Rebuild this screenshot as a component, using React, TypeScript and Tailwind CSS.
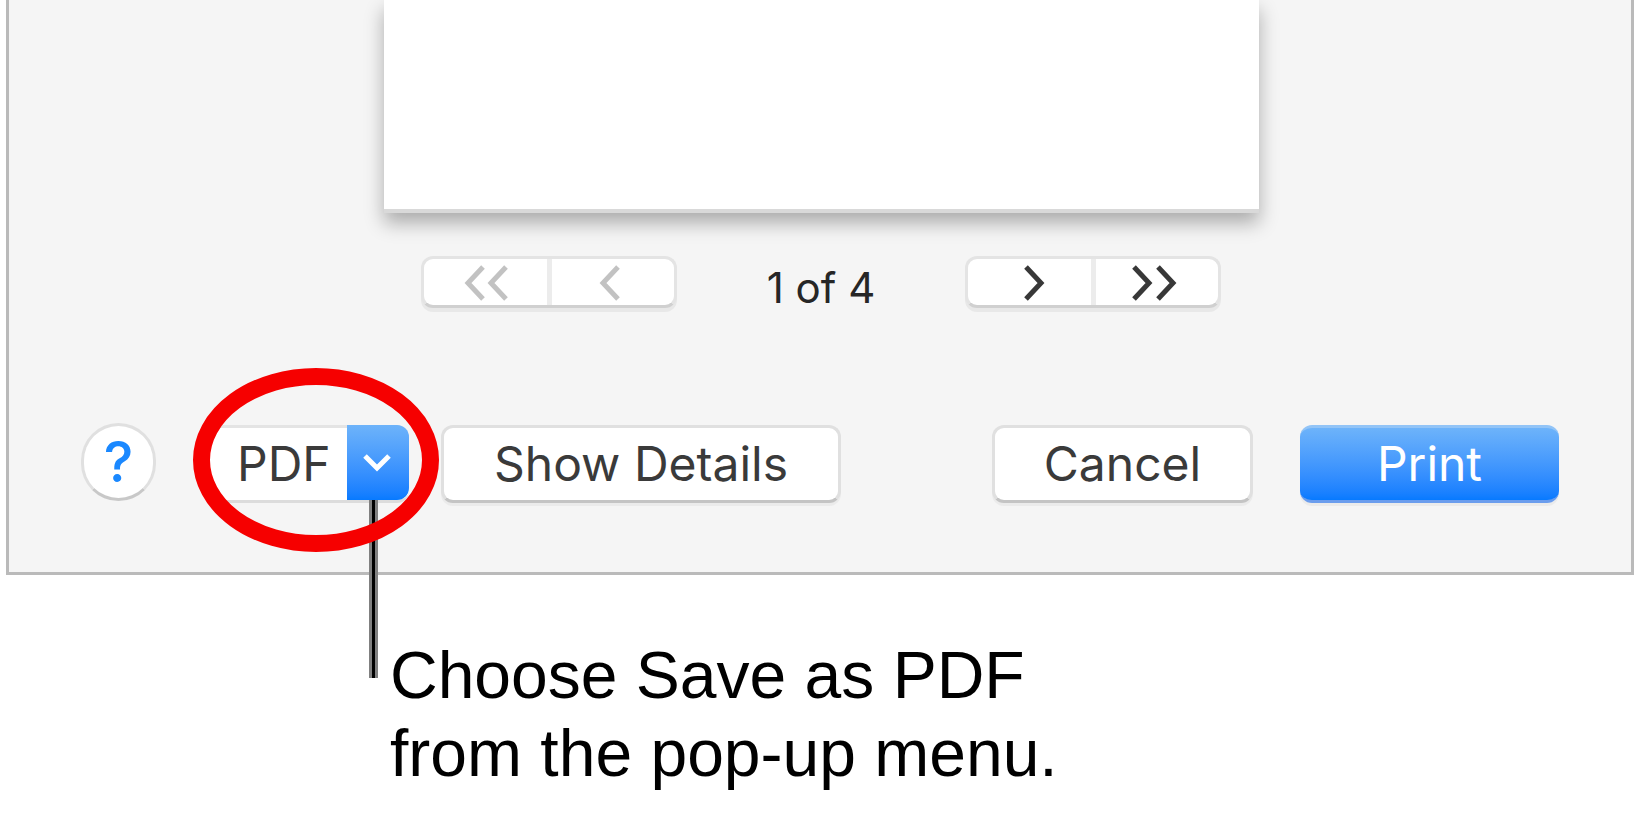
import { useState } from 'react'
import type { ReactNode } from 'react'
import clsx from 'clsx'

const TOTAL_PAGES = 4

const pushButton =
  'h-[78px] rounded-xl border-3 border-[#e0e0e0] border-b-[#c4c4c4] bg-white text-5xl text-[#3a3a3a] shadow-[0_3px_0_#ebebeb]'

// Chevron drawings for the page stepper, one per segment
const chevrons = {
  first: 'M58 7 L43 23 L58 39 M81 7 L66 23 L81 39',
  prev: 'M65 7 L50 23 L65 39',
  next: 'M57 7 L72 23 L57 39',
  last: 'M37 7 L52 23 L37 39 M61 7 L76 23 L61 39',
}

interface StepButtonProps {
  label: string
  path: string
  disabled?: boolean
  onClick: () => void
}

function StepButton({ label, path, disabled, onClick }: StepButtonProps) {
  return (
    <button
      aria-label={label}
      disabled={disabled}
      onClick={onClick}
      className={clsx('flex flex-1 items-center justify-center', disabled ? 'text-[#c2c2c2]' : 'text-[#383838]')}
    >
      <svg viewBox="0 0 120 44" className="h-11 w-30" fill="none" stroke="currentColor" strokeWidth="5">
        <path d={path} />
      </svg>
    </button>
  )
}

function Stepper({ children }: { children: ReactNode }) {
  return (
    <div className="flex h-[52px] w-64 divide-x-5 divide-[#ececec] rounded-xl border-3 border-[#e4e4e4] border-b-[#d0d0d0] bg-white shadow-[0_4px_0_#e8e8e8]">
      {children}
    </div>
  )
}

function PdfMenu() {
  return (
    <div className="relative ml-[50px] h-[78px] w-[203px]">
      <select
        aria-label="PDF"
        defaultValue="pdf"
        className="h-full w-full appearance-none rounded-xl border-y-3 border-t-[#e4e4e4] border-b-[#dcdcdc] bg-white pl-[31px] text-5xl text-[#3a3a3a] outline-none"
      >
        <option value="pdf">PDF</option>
        <option value="save">Save as PDF</option>
      </select>
      <div className="pointer-events-none absolute top-0 right-0 flex h-[75px] w-[62px] items-center justify-center rounded-r-xl bg-linear-to-b from-[#6db3fa] to-[#067aff]">
        <svg viewBox="0 0 32 20" className="h-5 w-8" fill="none" stroke="#fff" strokeWidth="5">
          <path d="M3 3 L15 15 L27 3" />
        </svg>
      </div>

      {/* Leader line down to the caption, then the ring over it */}
      <div className="pointer-events-none absolute top-[75px] right-[31px] h-[178px] w-[9px] border-x-3 border-[#808080] bg-black" />
      <svg
        viewBox="0 0 246 184"
        className="pointer-events-none absolute top-[-57px] left-[-13px] h-[184px] w-[246px] max-w-none"
        fill="none"
        stroke="#f60000"
        strokeWidth="17"
      >
        <ellipse cx="123" cy="92" rx="114.5" ry="83.5" />
      </svg>
    </div>
  )
}

export default function App() {
  const [page, setPage] = useState(1)

  return (
    <main className="bg-white pr-[7px] pl-[6px] font-['Inter',sans-serif]">
      <section className="border-3 border-t-0 border-[#bababa] bg-[#f5f5f5]">
        <div className="pl-0.5">
          {/* Page preview */}
          <div className="mx-auto h-[213px] w-[875px] border-b-4 border-[#d9d9d9] bg-white shadow-[0_10px_18px_rgba(0,0,0,0.3)]" />

          <div className="mt-[43px] flex justify-center">
            <Stepper>
              <StepButton label="First page" path={chevrons.first} disabled={page === 1} onClick={() => setPage(1)} />
              <StepButton label="Previous page" path={chevrons.prev} disabled={page === 1} onClick={() => setPage(page - 1)} />
            </Stepper>
            <p className="w-72 pt-2 text-center text-[42px] leading-12 text-[#262626]">
              {page} of {TOTAL_PAGES}
            </p>
            <Stepper>
              <StepButton label="Next page" path={chevrons.next} disabled={page === TOTAL_PAGES} onClick={() => setPage(page + 1)} />
              <StepButton label="Last page" path={chevrons.last} disabled={page === TOTAL_PAGES} onClick={() => setPage(TOTAL_PAGES)} />
            </Stepper>
          </div>
        </div>

        {/* Dialog buttons */}
        <div className="flex items-center px-18 pt-[111px] pb-[67px]">
          <button
            aria-label="Help"
            className="mb-1 h-[78px] w-[75px] rounded-full border-3 border-[#e0e0e0] border-b-[#c8c8c8] bg-white text-[56px] leading-none font-medium text-[#1a88ff]"
          >
            ?
          </button>
          <PdfMenu />
          <button className={clsx(pushButton, 'ml-8 w-[400px]')}>Show Details</button>
          <button className={clsx(pushButton, 'ml-auto w-[261px]')}>Cancel</button>
          <button className="ml-[47px] h-[78px] w-[259px] rounded-xl border-y-3 border-t-[#92c4f7] border-b-[#6b9ded] bg-linear-to-b from-[#6db3fa] to-[#067aff] text-5xl text-white shadow-[0_3px_0_#ebebeb]">
            Print
          </button>
        </div>
      </section>

      <p className="mt-[61px] ml-[384px] font-['Liberation_Sans',sans-serif] text-[66px] leading-[78px] text-black">
        Choose Save as PDF
        <br />
        from the pop-up menu.
      </p>
    </main>
  )
}
